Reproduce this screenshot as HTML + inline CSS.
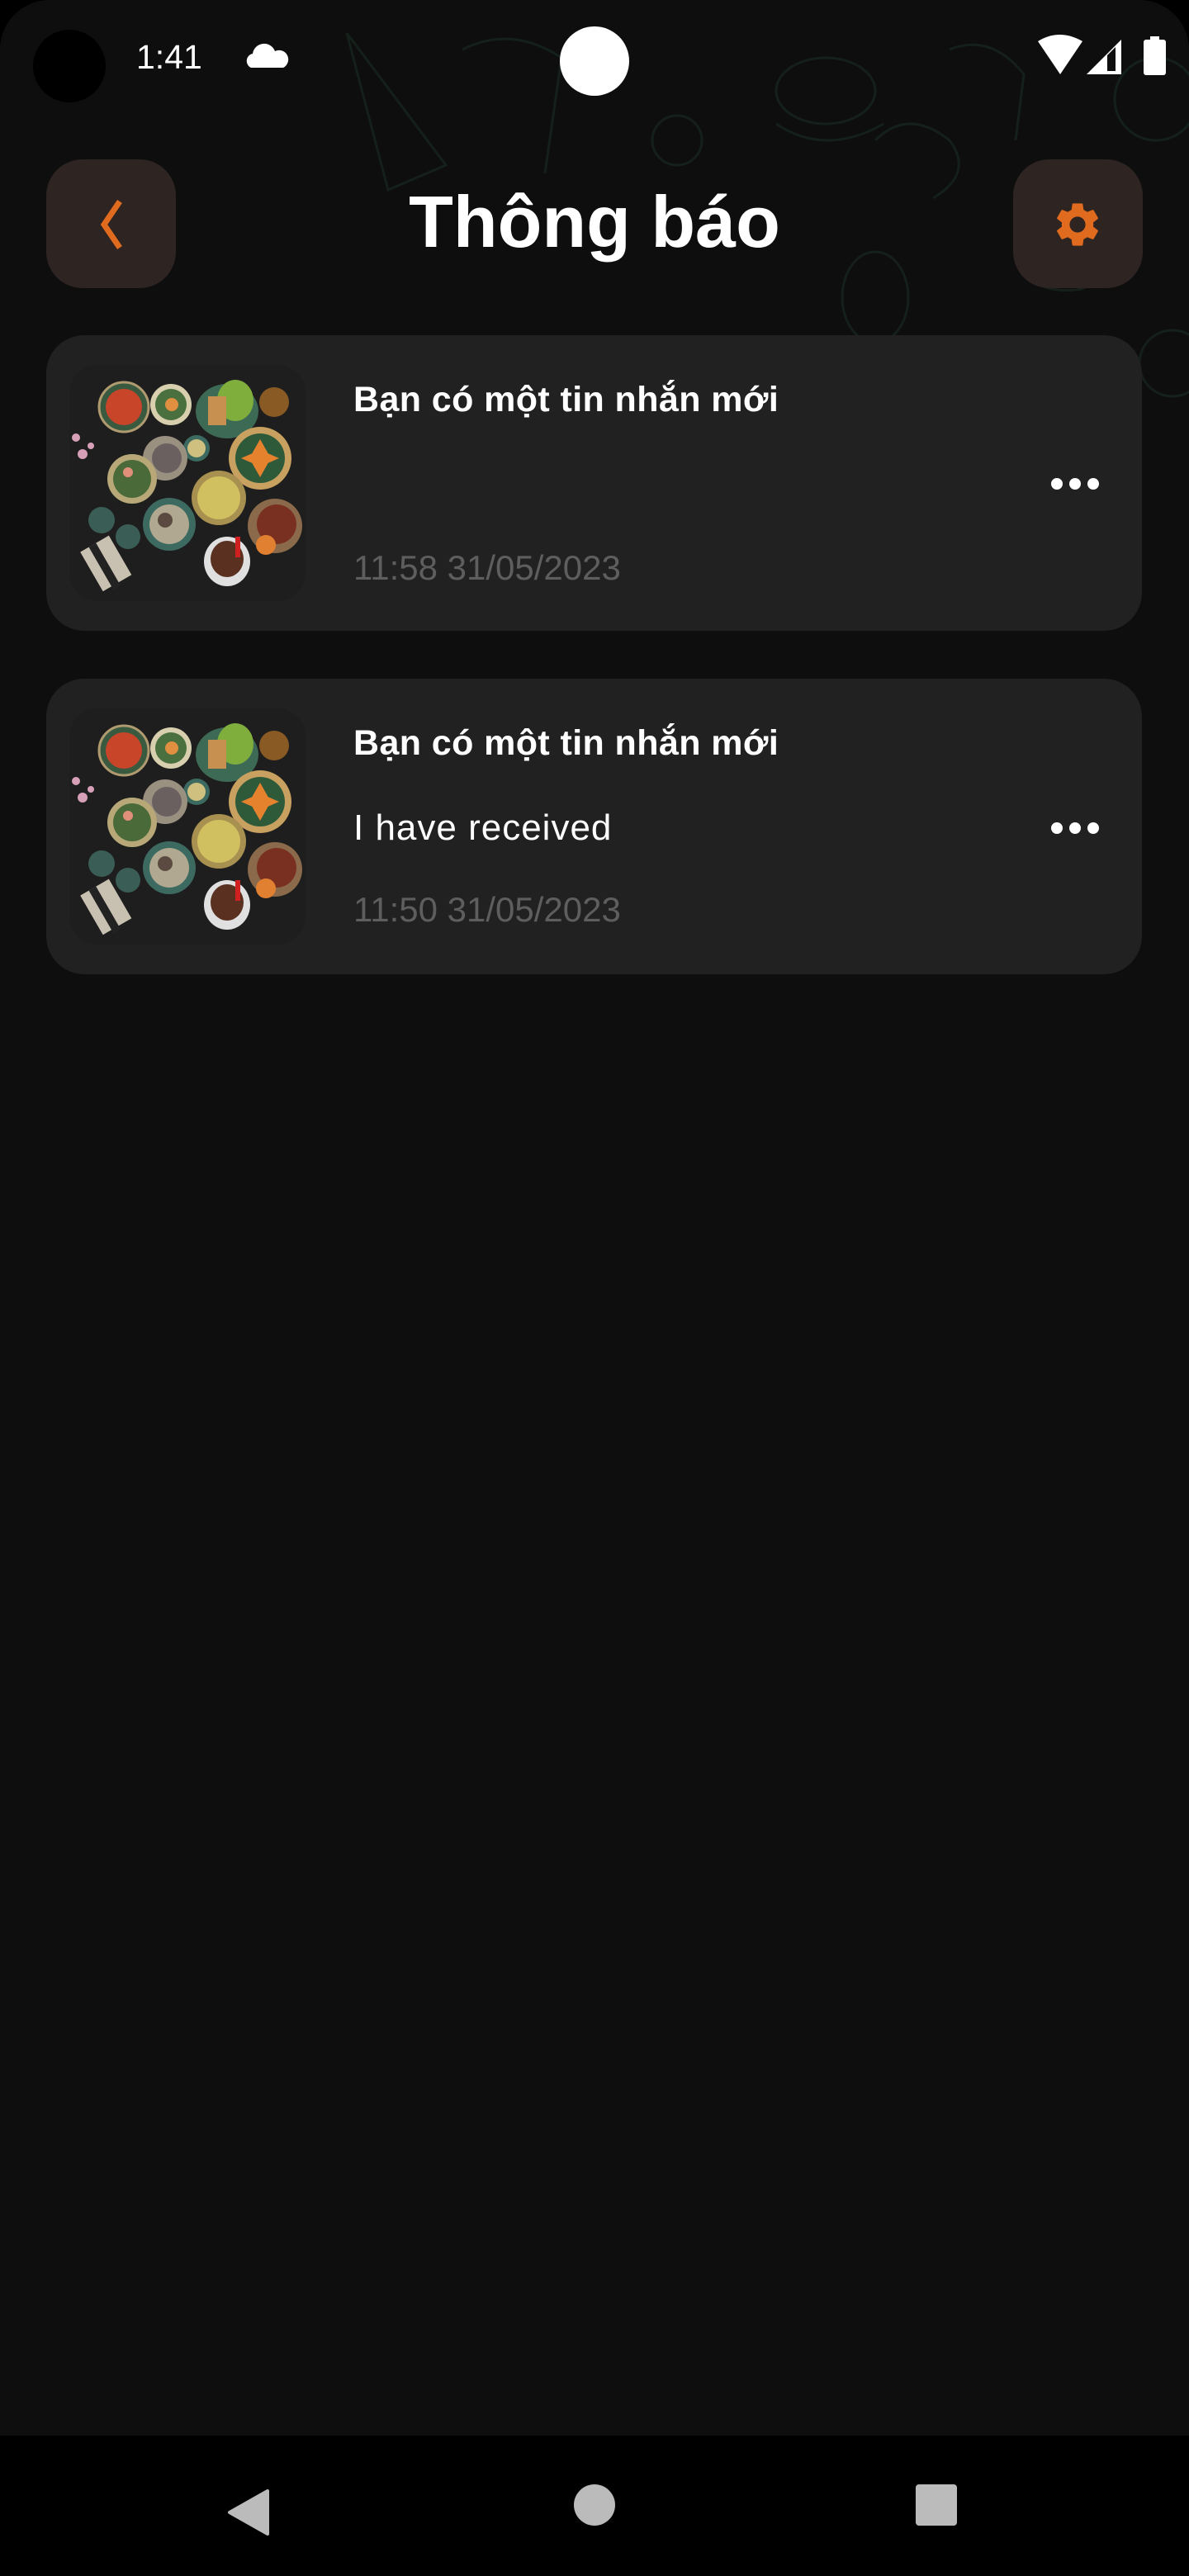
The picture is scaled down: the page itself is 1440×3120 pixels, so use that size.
<!DOCTYPE html>
<html><head><meta charset="utf-8"><style>
*{margin:0;padding:0;box-sizing:border-box}
html,body{width:1440px;height:3120px;background:#000;overflow:hidden;font-family:"Liberation Sans",sans-serif}
.screen{position:absolute;left:0;top:0;width:1440px;height:2950px;background:#0e0e0e;border-radius:60px 60px 0 0;overflow:hidden}
.nav{position:absolute;left:0;top:2950px;width:1440px;height:170px;background:#000}
.abs{position:absolute}
.btn{position:absolute;top:193px;width:157px;height:156px;border-radius:44px;background:#2e2522}
.card{position:absolute;left:56px;width:1327px;height:358px;border-radius:46px;background:#212121}
.t1{position:absolute;left:372px;color:#fff;font-weight:bold;font-size:43px;white-space:nowrap;letter-spacing:0.4px}
.t2{position:absolute;left:372px;color:#fff;font-size:44px;white-space:nowrap;letter-spacing:1px}
.t3{position:absolute;left:372px;color:#5e5e5e;font-size:42px;white-space:nowrap}
.dots{position:absolute;left:1217px;width:58px;height:14px}
.dots i{position:absolute;top:0;width:14px;height:14px;border-radius:50%;background:#fff}
</style></head><body>
<div class="screen">
<svg class="abs" style="left:0;top:0" width="1440" height="600" fill="none" stroke="#15201a" stroke-width="3">
<path d="M420 40 L470 230 L540 200 Z"/><path d="M560 60 q60 -30 120 10 l-20 140"/>
<ellipse cx="1000" cy="110" rx="60" ry="40"/><path d="M940 150 q60 40 130 0"/>
<path d="M1060 170 q40 -40 90 0 q30 40 -20 70"/><circle cx="820" cy="170" r="30"/>
<path d="M1150 60 q50 -20 90 30 l-10 80"/><ellipse cx="1060" cy="360" rx="40" ry="55"/>
<path d="M1230 250 q60 -40 120 10 q20 60 -40 90 q-60 10 -80 -40"/><circle cx="1400" cy="120" r="50"/>
<path d="M1000 420 q60 -30 110 20 l-10 60"/><circle cx="1420" cy="440" r="40"/><path d="M1230 420 q40 30 10 80"/>
</svg>
<div class="abs" style="left:40px;top:36px;width:88px;height:88px;border-radius:50%;background:#000"></div>
<div class="abs" style="left:165px;top:46px;color:#fff;font-size:41px">1:41</div>
<svg class="abs" style="left:298px;top:50px" width="52" height="34"><path d="M6 32 a9 9 0 0 1 2 -17 a14 14 0 0 1 27 -3 a10 10 0 0 1 10 20 Z" fill="#fff"/></svg>
<div class="abs" style="left:678px;top:32px;width:84px;height:84px;border-radius:50%;background:#fff"></div>
<svg class="abs" style="left:1255px;top:42px" width="165" height="52">
<path d="M2 8 Q28 -8 56 8 L29 48 Z" fill="#fff"/>
<path d="M61 48 L103 6 L103 48 Z" fill="#fff"/><path d="M86 25 L96 15 L96 44 L86 44 Z" fill="#0e0e0e"/>
<rect x="130" y="6" width="27" height="43" rx="3" fill="#fff"/><rect x="138" y="2" width="11" height="6" fill="#fff"/>
</svg>
<div class="btn" style="left:56px"></div>
<svg class="abs" style="left:112px;top:240px" width="44" height="64"><path d="M33 4 L14 32 L33 60" stroke="#e06a1e" stroke-width="7" fill="none"/></svg>
<div class="btn" style="left:1227px"></div>
<svg class="abs" style="left:1273px;top:240px" width="64" height="64" viewBox="0 0 24 24"><path fill="#e06a1e" d="M19.14 12.94c.04-.3.06-.61.06-.94 0-.32-.02-.64-.07-.94l2.030-1.58a.49.49 0 0 0 .12-.61l-1.920-3.32a.49.49 0 0 0-.59-.22l-2.390.96c-.5-.38-1.03-.7-1.620-.94l-.36-2.54a.48.48 0 0 0-.48-.41h-3.840c-.24 0-.43.17-.47.41l-.36 2.540c-.59.24-1.130.57-1.620.94l-2.390-.96a.48.48 0 0 0-.59.22L2.74 8.87c-.12.21-.08.47.12.61l2.030 1.58c-.05.3-.09.63-.09.94s.02.64.07.94l-2.030 1.580a.49.49 0 0 0-.12.61l1.920 3.32c.12.22.37.29.59.22l2.390-.96c.5.38 1.030.7 1.620.94l.36 2.54c.05.24.24.41.48.41h3.840c.24 0 .44-.17.47-.41l.36-2.54c.59-.24 1.130-.56 1.620-.94l2.390.96c.22.08.47 0 .59-.22l1.920-3.32c.12-.22.07-.47-.12-.61l-2.010-1.58zM12 15.6A3.6 3.6 0 1 1 12 8.4a3.6 3.6 0 0 1 0 7.2z"/></svg>
<div class="abs" style="left:0;width:1440px;top:218px;text-align:center;color:#fff;font-weight:bold;font-size:88px">Thông báo</div>

<div class="card" style="top:406px">
<svg class="abs" style="left:28px;top:36px" width="286" height="286"><use href="#food"/></svg>
<div class="t1" style="top:54px">Bạn có một tin nhắn mới</div>
<div class="t3" style="top:258px">11:58 31/05/2023</div>
<div class="dots" style="top:173px"><i style="left:0"></i><i style="left:22px"></i><i style="left:44px"></i></div>
</div>
<div class="card" style="top:822px">
<svg class="abs" style="left:28px;top:36px" width="286" height="286"><use href="#food"/></svg>
<div class="t1" style="top:54px">Bạn có một tin nhắn mới</div>
<div class="t2" style="top:156px">I have received</div>
<div class="t3" style="top:256px">11:50 31/05/2023</div>
<div class="dots" style="top:174px"><i style="left:0"></i><i style="left:22px"></i><i style="left:44px"></i></div>
</div>
</div>
<svg width="0" height="0" style="position:absolute"><defs>
<clipPath id="cp"><rect x="0" y="0" width="286" height="286" rx="34"/></clipPath>
<g id="food" clip-path="url(#cp)">
<rect width="286" height="286" fill="#1e1e1e"/>
<g transform="translate(-4,-2)">
<circle cx="70" cy="53" r="30" fill="#3a5a40" stroke="#b09a70" stroke-width="3"/><circle cx="70" cy="53" r="22" fill="#c8452a"/>
<circle cx="127" cy="50" r="25" fill="#d8cfae"/><circle cx="127" cy="50" r="19" fill="#4a7040"/><circle cx="128" cy="50" r="8" fill="#e09040"/>
<ellipse cx="195" cy="58" rx="38" ry="33" fill="#3d6a55"/><ellipse cx="205" cy="45" rx="22" ry="25" fill="#7fae3d"/><rect x="172" y="40" width="22" height="35" fill="#c89050"/>
<circle cx="252" cy="47" r="18" fill="#8a5a24"/>
<circle cx="158" cy="103" r="16" fill="#3c6a60"/><circle cx="158" cy="103" r="11" fill="#d0c080"/>
<circle cx="120" cy="115" r="27" fill="#9a9080"/><circle cx="122" cy="115" r="18" fill="#6a6060"/>
<circle cx="235" cy="115" r="38" fill="#c8a060"/><circle cx="235" cy="115" r="30" fill="#2f5a3a"/><path d="M235 92 L248 115 L235 138 L222 115 Z M212 115 L235 105 L258 115 L235 125Z" fill="#e5822e"/>
<circle cx="80" cy="140" r="30" fill="#b8a878"/><circle cx="80" cy="140" r="23" fill="#4a6a3a"/><circle cx="75" cy="132" r="6" fill="#e0907a"/>
<circle cx="185" cy="163" r="33" fill="#a89050"/><circle cx="185" cy="163" r="26" fill="#d0c060"/>
<circle cx="125" cy="195" r="32" fill="#3d6a60"/><circle cx="125" cy="195" r="24" fill="#b0a890"/><circle cx="120" cy="190" r="9" fill="#5a4a40"/>
<circle cx="253" cy="197" r="33" fill="#8a6a4a"/><circle cx="255" cy="195" r="24" fill="#7a3020"/><circle cx="242" cy="220" r="12" fill="#e08030"/>
<circle cx="43" cy="190" r="16" fill="#3a5d55"/><circle cx="75" cy="210" r="15" fill="#3a5d55"/>
<ellipse cx="195" cy="240" rx="28" ry="30" fill="#e0e0e0"/><ellipse cx="195" cy="237" rx="20" ry="22" fill="#5a3020"/><rect x="205" y="210" width="6" height="25" fill="#d02020"/>
<rect x="28" y="215" width="40" height="55" fill="#c8c0b0" transform="rotate(-30 48 242)"/><rect x="40" y="215" width="10" height="60" fill="#222" transform="rotate(-30 48 242)"/>
<circle cx="20" cy="110" r="6" fill="#d8a0b8"/><circle cx="12" cy="90" r="5" fill="#d8a0b8"/><circle cx="30" cy="100" r="4" fill="#d8a0b8"/>
</g></g></defs></svg>
<div class="nav">
<svg class="abs" style="left:270px;top:63px" width="60" height="60"><path d="M54 4 L54 56 L8 30 Z" fill="#bbb" stroke="#bbb" stroke-width="4" stroke-linejoin="round"/></svg>
<div class="abs" style="left:695px;top:59px;width:50px;height:50px;border-radius:50%;background:#bbb"></div>
<div class="abs" style="left:1109px;top:59px;width:50px;height:50px;border-radius:4px;background:#bbb"></div>
</div>
</body></html>
